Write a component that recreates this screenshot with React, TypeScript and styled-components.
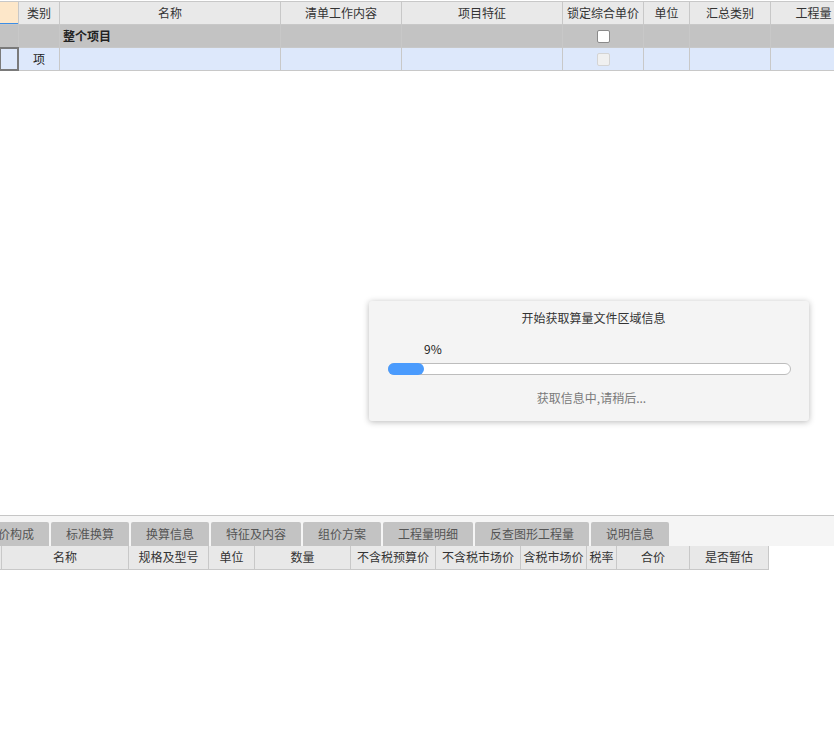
import React from "react";
import styled, { createGlobalStyle } from "styled-components";

const Global = createGlobalStyle`
  html, body { margin: 0; padding: 0; background: #fff; }
  body { font-family: "Microsoft YaHei", "Noto Sans CJK SC", "Noto Sans", sans-serif; font-size: 12px; color: #333; }
  #root { width: 834px; height: 729px; overflow: hidden; }
`;

const Page = styled.div`
  position: relative;
  width: 834px;
  height: 729px;
  display: flex;
  flex-direction: column;
  overflow: hidden;
`;

const TopArea = styled.div`
  flex: 1;
  padding-top: 1px;
  overflow: hidden;
`;

const Grid = styled.div<{ $cols: string }>`
  display: grid;
  grid-template-columns: ${(p) => p.$cols};
  width: max-content;
`;

const topCols = "19px 41px 221px 121px 161px 81px 46px 81px 86px";

const HeadCell = styled.div<{ $corner?: boolean; $align?: string }>`
  position: relative;
  box-sizing: border-box;
  height: 24px;
  line-height: 22px;
  border-top: 1px solid #c8c8c8;
  border-right: 1px solid #c8c8c8;
  border-bottom: 1px solid #c8c8c8;
  background: ${(p) => (p.$corner ? "#fde7c9" : "#e9e9e9")};
  text-align: ${(p) => p.$align || "center"};
  color: #333;
  white-space: nowrap;
  overflow: hidden;
  ${(p) =>
    p.$corner
      ? `&::after { content: ""; position: absolute; left: 0; right: 0; bottom: -1px; height: 2px; background: #3d8ee6; }`
      : ""}
`;

const BodyCell = styled.div<{ $bg: string; $bold?: boolean; $align?: string; $selected?: boolean }>`
  position: relative;
  box-sizing: border-box;
  height: 23px;
  line-height: 22px;
  border-right: 1px solid #c8c8c8;
  border-bottom: 1px solid #c8c8c8;
  background: ${(p) => p.$bg};
  font-weight: ${(p) => (p.$bold ? 700 : 400)};
  text-align: ${(p) => p.$align || "center"};
  padding-left: ${(p) => (p.$align === "left" ? "3px" : "0")};
  color: #222;
  white-space: nowrap;
  display: flex;
  align-items: center;
  justify-content: ${(p) => (p.$align === "left" ? "flex-start" : "center")};
  ${(p) =>
    p.$selected
      ? `&::after { content: ""; position: absolute; left: -1px; top: -1px; right: -1px; bottom: -1px; border: 2px solid #7a7a7a; }`
      : ""}
`;

const Check = styled.span<{ $disabled?: boolean }>`
  display: inline-block;
  box-sizing: border-box;
  width: 13px;
  height: 13px;
  border-radius: 2px;
  border: 1px solid ${(p) => (p.$disabled ? "#d4d4d4" : "#8a8a8a")};
  background: ${(p) => (p.$disabled ? "#f0f0f0" : "#ffffff")};
`;

const Dialog = styled.div`
  position: absolute;
  left: 369px;
  top: 301px;
  width: 440px;
  height: 120px;
  box-sizing: border-box;
  background: #f4f4f4;
  border-radius: 3px;
  box-shadow: 0 1px 6px rgba(0, 0, 0, 0.28);
  padding: 9px 14px 0 19px;
  display: flex;
  flex-direction: column;
`;

const DialogTitle = styled.div`
  line-height: 16px;
  text-align: center;
  color: #333;
  padding-left: 4px;
`;

const ProgressLabel = styled.div`
  margin-top: 15px;
  line-height: 16px;
  color: #222;
`;

const Bar = styled.div`
  margin-top: 6px;
  margin-right: 4px;
  height: 12px;
  box-sizing: border-box;
  border: 1px solid #bdbdbd;
  border-radius: 6px;
  background: #fff;
  position: relative;
  overflow: visible;
`;

const BarFill = styled.div`
  position: absolute;
  left: -1px;
  top: -1px;
  bottom: -1px;
  border-radius: 6px;
  background: #4a9bfd;
`;

const Status = styled.div`
  margin-top: 15px;
  line-height: 16px;
  text-align: center;
  color: #7a7a7a;
`;

const BottomPanel = styled.div`
  height: 213px;
  flex: none;
  border-top: 1px solid #c6c6c6;
  display: flex;
  flex-direction: column;
`;

const TabBar = styled.div`
  height: 30px;
  box-sizing: border-box;
  background: #f5f5f5;
  padding-top: 6px;
  display: flex;
  gap: 2px;
  margin-left: -29px;
`;

const Tab = styled.div`
  height: 24px;
  line-height: 24px;
  padding: 0 15px;
  background: #c3c3c3;
  color: #555;
  border-radius: 2px 2px 0 0;
  white-space: nowrap;
`;

const SubHead = styled.div<{ $w: number }>`
  box-sizing: border-box;
  width: ${(p) => p.$w}px;
  height: 24px;
  line-height: 22px;
  background: #e8e8e8;
  border-right: 1px solid #c8c8c8;
  border-bottom: 1px solid #c8c8c8;
  text-align: center;
  color: #333;
  white-space: nowrap;
  overflow: hidden;
`;

const SubRow = styled.div`
  display: flex;
`;

const topHeads = ["", "类别", "名称", "清单工作内容", "项目特征", "锁定综合单价", "单位", "汇总类别", "工程量"];

const tabs = ["组价构成", "标准换算", "换算信息", "特征及内容", "组价方案", "工程量明细", "反查图形工程量", "说明信息"];

const subCols: [string, number][] = [
  ["", 2],
  ["名称", 127],
  ["规格及型号", 80],
  ["单位", 46],
  ["数量", 96],
  ["不含税预算价", 85],
  ["不含税市场价", 85],
  ["含税市场价", 66],
  ["税率", 30],
  ["合价", 73],
  ["是否暂估", 79],
];

export default function App() {
  const progress = 9;
  const barWidth = 403;
  const fillW = Math.round((barWidth * progress) / 100);
  return (
    <Page>
      <Global />
      <TopArea>
        <Grid $cols={topCols}>
          {topHeads.map((h, i) => (
            <HeadCell key={i} $corner={i === 0}>
              {h}
            </HeadCell>
          ))}
          <BodyCell $bg="#c3c3c3" />
          <BodyCell $bg="#c3c3c3" />
          <BodyCell $bg="#c3c3c3" $bold $align="left">整个项目</BodyCell>
          <BodyCell $bg="#c3c3c3" />
          <BodyCell $bg="#c3c3c3" />
          <BodyCell $bg="#c3c3c3"><Check /></BodyCell>
          <BodyCell $bg="#c3c3c3" />
          <BodyCell $bg="#c3c3c3" />
          <BodyCell $bg="#c3c3c3" />

          <BodyCell $bg="#dde8fb" $selected />
          <BodyCell $bg="#dde8fb">项</BodyCell>
          <BodyCell $bg="#dde8fb" />
          <BodyCell $bg="#dde8fb" />
          <BodyCell $bg="#dde8fb" />
          <BodyCell $bg="#dde8fb"><Check $disabled /></BodyCell>
          <BodyCell $bg="#dde8fb" />
          <BodyCell $bg="#dde8fb" />
          <BodyCell $bg="#dde8fb" />
        </Grid>
      </TopArea>

      <Dialog>
        <DialogTitle>开始获取算量文件区域信息</DialogTitle>
        <ProgressLabel style={{ paddingLeft: fillW }}>{progress}%</ProgressLabel>
        <Bar>
          <BarFill style={{ width: fillW }} />
        </Bar>
        <Status>获取信息中,请稍后...</Status>
      </Dialog>

      <BottomPanel>
        <TabBar>
          {tabs.map((t) => (
            <Tab key={t}>{t}</Tab>
          ))}
        </TabBar>
        <SubRow>
          {subCols.map(([t, w], i) => (
            <SubHead key={i} $w={w}>
              {t}
            </SubHead>
          ))}
        </SubRow>
      </BottomPanel>
    </Page>
  );
}
